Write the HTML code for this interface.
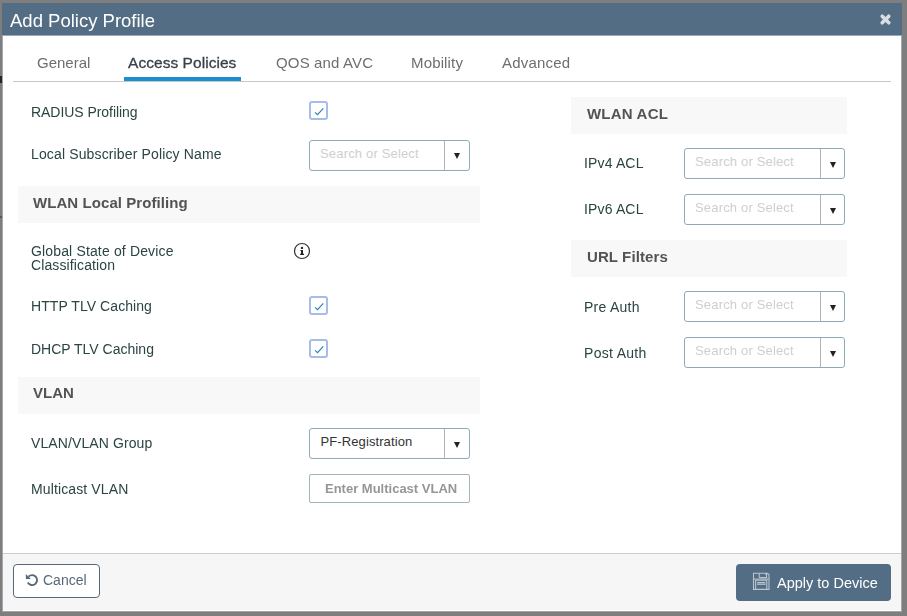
<!DOCTYPE html>
<html><head><meta charset="utf-8">
<style>
*{margin:0;padding:0;box-sizing:border-box}
html,body{width:907px;height:616px;overflow:hidden;background:#7d7e7d;font-family:"Liberation Sans",sans-serif}
.a{position:absolute}
.t{position:absolute;white-space:nowrap;line-height:1;will-change:transform}
#dlg{position:absolute;left:2px;top:3px;width:900px;height:609px;background:#fff;border-left:1px solid #a3a8ad;border-right:1px solid #a3a8ad;border-bottom:1px solid #9ea3aa}
#hdr{position:absolute;left:2px;top:3px;width:900px;height:33px;background:#536d84;border-bottom:1px solid #9aaab8}
.lbl{font-size:14px;color:#2b4543}
.sec{position:absolute;background:#f8f8f8}
.sect{font-size:15px;font-weight:bold;color:#535353}
.tab{font-size:15px;color:#6b6f73}
.sel{position:absolute;width:161px;height:31px;border:1px solid #8eaab6;border-radius:3px;background:#fff}
.sel .div{position:absolute;left:134px;top:0;width:1px;height:100%;background:#abb5ba}
.sel .ph{position:absolute;left:10px;font-size:13px;color:#cfcfcf;line-height:1;white-space:nowrap;letter-spacing:0.17px}
.sel .arr{position:absolute;left:144px;width:0;height:0;border-left:3.5px solid transparent;border-right:3.5px solid transparent;border-top:6px solid #222}
.cb{position:absolute;width:19px;height:19px;border:2px solid #a6bcea;border-radius:3px;background:#fff}
.cb svg{position:absolute;left:0;top:0}
</style></head><body>
<div class="a" style="left:0;top:76px;width:2px;height:7px;background:#23272b"></div>
<div class="a" style="left:0;top:216px;width:2px;height:2px;background:#55585b"></div>
<div id="dlg"></div>
<div id="hdr"></div>
<div class="t" style="left:10px;top:11.8px;font-size:18.5px;color:#fff">Add Policy Profile</div>
<svg class="a" style="left:879px;top:13px" width="13" height="13"><path d="M3.2 3.2 L9.8 9.8 M9.8 3.2 L3.2 9.8" stroke="#d8dde2" stroke-width="3.6" stroke-linecap="round"/></svg>

<!-- tabs -->
<div class="t tab" style="left:37px;top:55px">General</div>
<div class="t tab" style="left:128px;top:54.5px;color:#3a4147;font-size:15.5px;letter-spacing:0.05px;-webkit-text-stroke:0.3px #3a4147">Access Policies</div>
<div class="t tab" style="left:276px;top:55px;letter-spacing:0.15px">QOS and AVC</div>
<div class="t tab" style="left:411px;top:55px;letter-spacing:0.15px">Mobility</div>
<div class="t tab" style="left:502px;top:55px;letter-spacing:0.2px">Advanced</div>
<div class="a" style="left:13px;top:81px;width:878px;height:1px;background:#c8c8c8"></div>
<div class="a" style="left:124px;top:77px;width:117px;height:4px;background:#1a8fd0"></div>

<!-- left column -->
<div class="t lbl" style="left:31px;top:105.3px;font-size:14px;letter-spacing:-0.05px">RADIUS Profiling</div>
<div class="cb" style="left:309px;top:101px"><svg width="15" height="15"><path d="M4 9.3 L6.5 11.6 L12.3 5.4" fill="none" stroke="#2a80b8" stroke-width="1.15"/></svg></div>

<div class="t lbl" style="left:31px;top:147px;letter-spacing:0.14px">Local Subscriber Policy Name</div>
<div class="sel" style="left:309px;top:140px"><div class="div"></div><div class="ph" style="top:6px">Search or Select</div><div class="arr" style="top:12px"></div></div>

<div class="sec" style="left:18px;top:186px;width:462px;height:37px"></div>
<div class="t sect" style="left:33px;top:194.5px;letter-spacing:0.07px">WLAN Local Profiling</div>

<div class="t lbl" style="left:31px;top:244px;letter-spacing:0.15px">Global State of Device</div>
<div class="t lbl" style="left:31px;top:258px;letter-spacing:0.12px">Classification</div>
<svg class="a" style="left:293px;top:242px" width="18" height="18"><circle cx="9" cy="9" r="7.5" fill="none" stroke="#333" stroke-width="1.2"/><circle cx="9" cy="5.9" r="1.2" fill="#222"/><path d="M7.4 8.0 H10 V11.7 H11 V12.9 H7.1 V11.7 H8 V8.9 H7.4Z" fill="#222"/></svg>

<div class="t lbl" style="left:31px;top:299.3px;letter-spacing:0.07px">HTTP TLV Caching</div>
<div class="cb" style="left:309px;top:296px"><svg width="15" height="15"><path d="M4 9.3 L6.5 11.6 L12.3 5.4" fill="none" stroke="#2a80b8" stroke-width="1.15"/></svg></div>

<div class="t lbl" style="left:31px;top:341.8px">DHCP TLV Caching</div>
<div class="cb" style="left:309px;top:339px"><svg width="15" height="15"><path d="M4 9.3 L6.5 11.6 L12.3 5.4" fill="none" stroke="#2a80b8" stroke-width="1.15"/></svg></div>

<div class="sec" style="left:18px;top:377px;width:462px;height:37px"></div>
<div class="t sect" style="left:33px;top:385.3px">VLAN</div>

<div class="t lbl" style="left:31px;top:436px;letter-spacing:0.1px">VLAN/VLAN Group</div>
<div class="sel" style="left:309px;top:428px;height:31px"><div class="div"></div><div class="ph" style="left:10.5px;top:6px;color:#333;letter-spacing:0.1px">PF-Registration</div><div class="arr" style="top:13px"></div></div>

<div class="t lbl" style="left:31px;top:482px;letter-spacing:0.12px">Multicast VLAN</div>
<div class="a" style="left:309px;top:474px;width:161px;height:29px;border:1px solid #a2b4bc;border-radius:2px"></div>
<div class="t" style="left:325px;top:482px;font-size:13px;font-weight:bold;color:#969696">Enter Multicast VLAN</div>

<!-- right column -->
<div class="sec" style="left:571px;top:97px;width:276px;height:37px"></div>
<div class="t sect" style="left:587px;top:105.9px;letter-spacing:0.2px">WLAN ACL</div>

<div class="t lbl" style="left:584px;top:156px;letter-spacing:0.15px">IPv4 ACL</div>
<div class="sel" style="left:684px;top:148px;height:31px"><div class="div" style="left:135px"></div><div class="ph" style="left:10px;top:5.5px">Search or Select</div><div class="arr" style="left:145px;top:12.5px"></div></div>

<div class="t lbl" style="left:584px;top:202px;letter-spacing:0.15px">IPv6 ACL</div>
<div class="sel" style="left:684px;top:194px;height:31px"><div class="div" style="left:135px"></div><div class="ph" style="left:10px;top:5.5px">Search or Select</div><div class="arr" style="left:145px;top:12.5px"></div></div>

<div class="sec" style="left:571px;top:240px;width:276px;height:37px"></div>
<div class="t sect" style="left:587px;top:248.5px;letter-spacing:0.1px">URL Filters</div>

<div class="t lbl" style="left:584px;top:299.7px;letter-spacing:0.25px">Pre Auth</div>
<div class="sel" style="left:684px;top:291px;height:31px"><div class="div" style="left:135px"></div><div class="ph" style="left:10px;top:5.5px">Search or Select</div><div class="arr" style="left:145px;top:12.5px"></div></div>

<div class="t lbl" style="left:584px;top:345.5px;letter-spacing:0.3px">Post Auth</div>
<div class="sel" style="left:684px;top:337px;height:31px"><div class="div" style="left:135px"></div><div class="ph" style="left:10px;top:5.5px">Search or Select</div><div class="arr" style="left:145px;top:12.5px"></div></div>

<!-- footer -->
<div class="a" style="left:3px;top:553px;width:898px;height:57px;background:#f6f6f6;border-top:1px solid #cdcdcd"></div>
<div class="a" style="left:13px;top:564px;width:87px;height:34px;border:1px solid #55697a;border-radius:4px;background:#fff"></div>
<svg class="a" style="left:20px;top:568px" width="24" height="24"><path d="M8.56 8.56 A5 5 0 1 1 7.77 14.6" fill="none" stroke="#55697a" stroke-width="1.9"/><path d="M5.9 5.9 L5.9 10.9 L10.9 10.9 Z" fill="#55697a"/></svg>
<div class="t" style="left:43px;top:573px;font-size:14px;color:#55697a">Cancel</div>

<div class="a" style="left:736px;top:564px;width:155px;height:37px;border-radius:4px;background:#536d84"></div>
<svg class="a" style="left:752px;top:572px" width="19" height="19"><g fill="none" stroke="#b9c5d1" stroke-width="1.1"><path d="M1.5 1.3 H15.6 L17 2.7 V17.4 H1.5 Z"/><path d="M7.2 1.3 V4.8 Q7.2 5.6 8 5.6 H14.6 V1.3"/><path d="M1.8 7.1 H16.7"/><path d="M3.6 17.4 V8.3 H14.8 V17.4"/><path d="M5.2 10.5 H13.4"/></g><path d="M5 12.2 H13.6" stroke="#a9b6c3" stroke-width="1.6"/><circle cx="14" cy="2.2" r="0.7" fill="#d0dae4"/></svg>
<div class="t" style="left:777px;top:576px;font-size:14.5px;color:#fff">Apply to Device</div>
</body></html>
